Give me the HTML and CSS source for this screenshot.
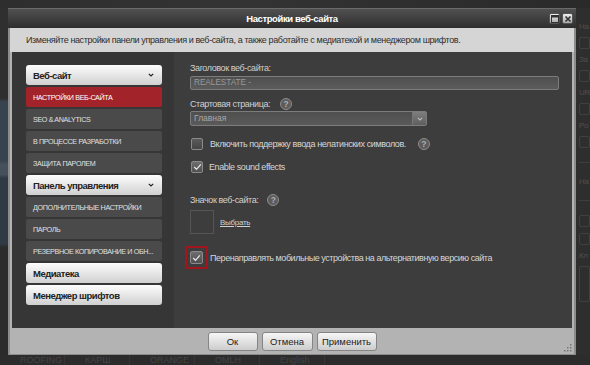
FILE: index.html
```html
<!DOCTYPE html>
<html lang="ru">
<head>
  <meta charset="UTF-8" />
  <title>Настройки веб-сайта</title>
  <link rel="stylesheet" href="styles.css">
</head>
<body>
  <div class="screen">
    <div class="backdrop-top"></div>

    <div class="middle">
      <div class="backdrop-left"></div>

      <div class="dialog">
        <div class="titlebar">
          <span></span>
          <span class="title">Настройки веб-сайта</span>
          <div class="win-buttons">
            <span class="win-btn">
              <svg width="8" height="8" viewBox="0 0 8 8"><rect x="0.5" y="0.5" width="7" height="7" fill="none" stroke="#333" /><line x1="0" y1="1.5" x2="8" y2="1.5" stroke="#333" stroke-width="2" /></svg>
            </span>
            <span class="win-btn">
              <svg width="8" height="8" viewBox="0 0 8 8"><path d="M1.5 1.5 L6.5 6.5 M6.5 1.5 L1.5 6.5" stroke="#333" stroke-width="1.6" /></svg>
            </span>
          </div>
        </div>

        <div class="desc">Изменяйте настройки панели управления и веб-сайта, а также работайте с медиатекой и менеджером шрифтов.</div>

        <div class="content">
          <div class="sidebar">
            <div class="nav-head">Веб-сайт <svg class="chev" width="6" height="4" viewBox="0 0 6 4"><path d="M0.8 0.8 L3 3 L5.2 0.8" fill="none" stroke="#222" stroke-width="1.2" /></svg></div>
            <div class="nav-item active">Настройки веб-сайта</div>
            <div class="nav-item">SEO &amp; Analytics</div>
            <div class="nav-item">В процессе разработки</div>
            <div class="nav-item">Защита паролем</div>
            <div class="nav-head">Панель управления <svg class="chev" width="6" height="4" viewBox="0 0 6 4"><path d="M0.8 0.8 L3 3 L5.2 0.8" fill="none" stroke="#222" stroke-width="1.2" /></svg></div>
            <div class="nav-item">Дополнительные настройки</div>
            <div class="nav-item">Пароль</div>
            <div class="nav-item">Резервное копирование и обн...</div>
            <div class="nav-head">Медиатека</div>
            <div class="nav-head">Менеджер шрифтов</div>
          </div>

          <div class="main">
            <div class="label">Заголовок веб-сайта:</div>
            <div class="text-input">REALESTATE -</div>

            <div class="label-row start-row">
              <span>Стартовая страница:</span>
              <span class="help">?</span>
            </div>
            <div class="select">
              <span class="select-value">Главная</span>
              <span class="select-btn"><svg width="6" height="4" viewBox="0 0 6 4"><path d="M0.8 0.8 L3 3 L5.2 0.8" fill="none" stroke="#bbb" stroke-width="1.1" /></svg></span>
            </div>

            <div class="check-row first">
              <span class="checkbox"></span>
              <span>Включить поддержку ввода нелатинских символов.</span>
              <span class="help">?</span>
            </div>
            <div class="check-row second">
              <span class="checkbox checked"><svg width="9" height="8" viewBox="0 0 9 8"><path d="M1.2 4 L3.5 6.3 L7.8 1.3" fill="none" stroke="#e6e6e6" stroke-width="1.3" /></svg></span>
              <span>Enable sound effects</span>
            </div>

            <div class="label-row icon-label">
              <span>Значок веб-сайта:</span>
              <span class="help">?</span>
            </div>
            <div class="icon-row">
              <span class="icon-box"></span>
              <a class="pick" href="#">Выбрать</a>
            </div>

            <div class="check-row redirect">
              <span class="highlight"><span class="checkbox checked"><svg width="9" height="8" viewBox="0 0 9 8"><path d="M1.2 4 L3.5 6.3 L7.8 1.3" fill="none" stroke="#e6e6e6" stroke-width="1.3" /></svg></span></span>
              <span>Перенаправлять мобильные устройства на альтернативную версию сайта</span>
            </div>
          </div>
        </div>

        <div class="footer">
          <span></span>
          <div class="buttons">
            <button class="btn ok">Ок</button>
            <button class="btn cancel">Отмена</button>
            <button class="btn apply">Применить</button>
          </div>
          <svg class="grip" width="8" height="8" viewBox="0 0 8 8">
            <rect x="6" y="0" width="1.5" height="1.5" fill="#777" />
            <rect x="3" y="3" width="1.5" height="1.5" fill="#777" />
            <rect x="6" y="3" width="1.5" height="1.5" fill="#777" />
            <rect x="0" y="6" width="1.5" height="1.5" fill="#777" />
            <rect x="3" y="6" width="1.5" height="1.5" fill="#777" />
            <rect x="6" y="6" width="1.5" height="1.5" fill="#777" />
          </svg>
        </div>
      </div>

      <div class="backdrop-right">
        <span class="bg-label">На</span>
        <span class="bg-box"></span>
        <span class="bg-label">За</span>
        <span class="bg-box"></span>
        <span class="bg-label">UR</span>
        <span class="bg-box"></span>
        <span class="bg-label">Po</span>
        <span class="bg-box"></span>
        <span class="bg-line"></span>
        <span class="bg-label">На</span>
        <span class="bg-line"></span>
        <span class="bg-box"></span>
        <span class="bg-box"></span>
        <span class="bg-label">Кл</span>
        <span class="bg-box tall"></span>
      </div>
    </div>

    <div class="backdrop-bottom">
      <span>ROOFING</span>
      <span>КАРШ</span>
      <span>ORANGE</span>
      <span>OMLH</span>
      <span>English</span>
    </div>
  </div>
</body>
</html>
```

FILE: styles.css
```css
* {
  box-sizing: border-box;
}

body {
  margin: 0;
  background: #2b2b2b;
  font-family: 'Liberation Sans', Arial, sans-serif;
  font-size: 9px;
  letter-spacing: -0.4px;
  color: #d8d8d8;
  overflow: hidden;
}

.screen {
  width: 590px;
  height: 365px;
  display: flex;
  flex-direction: column;
}

/* dimmed page behind the dialog */
.backdrop-top {
  height: 8px;
  background: linear-gradient(to right, #2e2e2e, #333 40%, #2a2a2a);
}

.middle {
  display: flex;
  height: 347px;
}

.backdrop-left {
  width: 8px;
  background: linear-gradient(#2f2f2f 0, #2f2f2f 26%, #37434e 27%, #37434e 44%, #45505a 45%, #45505a 48%, #2f3a44 49%, #2f3a44 68%, #2b2b2b 69%);
}

.backdrop-right {
  flex: 1;
  display: flex;
  flex-direction: column;
  gap: 6px;
  padding: 14px 0 0 3px;
  overflow: hidden;
  background: #2e2e2e;
}

.bg-label {
  color: #4e4e4e;
  font-size: 8px;
  white-space: nowrap;
}

.bg-box {
  height: 12px;
  border: 1px solid #404040;
  border-radius: 2px;
}

.bg-box.tall {
  height: 36px;
}

.bg-line {
  height: 1px;
  background: #3e3e3e;
  margin: 8px 0;
}

.backdrop-bottom {
  flex: 1;
  display: flex;
  background: #2c2c2c;
  color: #444;
  font-size: 9px;
  letter-spacing: 0;
  line-height: 10px;
  overflow: hidden;
}

.backdrop-bottom span {
  width: 65px;
  padding-left: 20px;
  border-right: 1px solid #363636;
}

/* dialog */
.dialog {
  width: 568px;
  display: flex;
  flex-direction: column;
  background: #8c8c8c;
  padding: 0 1px 1px;
}

.titlebar {
  height: 20px;
  margin: 0 -1px;
  display: grid;
  grid-template-columns: 1fr auto 1fr;
  align-items: center;
  background: linear-gradient(#505050, #2e2e2e);
  border-top: 1px solid #6a6a6a;
}

.title {
  color: #fff;
  font-weight: bold;
  font-size: 9.5px;
  letter-spacing: -0.4px;
}

.win-buttons {
  justify-self: end;
  display: flex;
  gap: 2px;
  padding-right: 3px;
}

.win-btn {
  width: 11px;
  height: 11px;
  display: flex;
  align-items: center;
  justify-content: center;
  background: linear-gradient(#f0f0f0, #a8a8a8);
  border: 1px solid #555;
  border-radius: 2px;
}

.desc {
  height: 24px;
  margin: 0 1px;
  padding-left: 16px;
  display: flex;
  align-items: center;
  background: #d5d5d5;
  color: #2e2e2e;
  letter-spacing: -0.38px;
}

.content {
  height: 276px;
  margin: 0 1px;
  padding: 0 2px;
  display: flex;
  background: #b3b3b3;
}

.sidebar {
  width: 163px;
  padding: 13px 12px 0 14px;
  display: flex;
  flex-direction: column;
  gap: 2px;
  background: #363636;
}

.nav-head {
  height: 20px;
  padding: 0 8px 0 7px;
  display: flex;
  align-items: center;
  justify-content: space-between;
  border-radius: 3px;
  background: linear-gradient(#fdfdfd, #d0d0d0);
  color: #222;
  font-weight: bold;
  font-size: 9.5px;
  letter-spacing: -0.5px;
}

.nav-item {
  height: 20px;
  padding-left: 7px;
  display: flex;
  align-items: center;
  border-radius: 2px;
  background: #4a4a4a;
  color: #e0e0e0;
  font-size: 7.2px;
  letter-spacing: -0.37px;
  text-transform: uppercase;
  white-space: nowrap;
}

.nav-item.active {
  background: #a2242a;
  color: #fff;
}

.main {
  flex: 1;
  padding: 10px 13px 0 16px;
  display: flex;
  flex-direction: column;
  align-items: flex-start;
  background: #3d3d3d;
}

.label {
  height: 12px;
  line-height: 12px;
  color: #d0d0d0;
}

.text-input {
  width: 369px;
  height: 14px;
  margin-top: 2px;
  padding-left: 3px;
  line-height: 12px;
  border: 1px solid #7c7c7c;
  border-radius: 2px;
  background: linear-gradient(#4f4f4f, #5c5c5c);
  color: #9a9a9a;
  font-size: 8.2px;
  letter-spacing: 0;
}

.label-row {
  height: 14px;
  display: flex;
  align-items: center;
  gap: 10px;
  color: #d0d0d0;
}

.start-row {
  margin-top: 7px;
}

.icon-label {
  margin-top: 19px;
  gap: 9px;
}

.help {
  width: 12px;
  height: 12px;
  display: flex;
  align-items: center;
  justify-content: center;
  border: 1.5px solid #8c8c8c;
  border-radius: 50%;
  background: #5c5c5c;
  color: #b0b0b0;
  font-weight: bold;
  font-size: 8.5px;
  letter-spacing: 0;
}

.select {
  width: 237px;
  height: 15px;
  display: flex;
  border: 1px solid #7c7c7c;
  border-radius: 2px;
  background: linear-gradient(#4f4f4f, #5a5a5a);
}

.select-value {
  flex: 1;
  padding-left: 3px;
  line-height: 13px;
  color: #a8a8a8;
  font-size: 8.5px;
  letter-spacing: 0;
}

.select-btn {
  width: 14px;
  display: flex;
  align-items: center;
  justify-content: center;
  border-left: 1px solid #777;
  background: linear-gradient(#7e7e7e, #5e5e5e);
}

.check-row {
  height: 14px;
  display: flex;
  align-items: center;
  gap: 7px;
  color: #d6d6d6;
}

.check-row.first {
  margin-top: 11px;
  padding-left: 1px;
}

.check-row.first .help {
  margin-left: 5px;
}

.check-row.second {
  margin-top: 9px;
  padding-left: 1px;
  gap: 6px;
}

.checkbox {
  width: 12px;
  height: 12px;
  display: flex;
  align-items: center;
  justify-content: center;
  border: 1px solid #8a8a8a;
  border-radius: 2px;
  background: linear-gradient(#5a5a5a, #454545);
}

.checkbox.checked {
  background: linear-gradient(#6e6e6e, #505050);
}

.icon-row {
  margin-top: 3px;
  display: flex;
  align-items: center;
  gap: 6px;
}

.icon-box {
  width: 24px;
  height: 24px;
  border: 1px solid #555;
}

.pick {
  color: #d0d0d0;
  font-size: 8px;
  letter-spacing: -0.3px;
}

.check-row.redirect {
  height: 23px;
  margin: 12px 0 0 -5px;
  gap: 2px;
  letter-spacing: -0.45px;
}

.highlight {
  padding: 3px;
  border: 2px solid #a3151d;
  border-radius: 2px;
}

.highlight .checkbox {
  width: 13px;
  height: 13px;
}

.footer {
  flex: 1;
  margin: 0 1px;
  display: grid;
  grid-template-columns: 1fr auto 1fr;
  background: #b3b3b3;
}

.buttons {
  padding-top: 4px;
  display: flex;
  gap: 4px;
}

.btn {
  height: 19px;
  padding: 0;
  border: 1px solid #858585;
  border-radius: 3px;
  background: linear-gradient(#f6f6f6, #cdcdcd);
  color: #222;
  font-family: 'Liberation Sans', Arial, sans-serif;
  font-size: 9.5px;
  letter-spacing: 0;
}

.ok {
  width: 50px;
}

.cancel {
  width: 51px;
}

.apply {
  width: 60px;
}

.grip {
  justify-self: end;
  align-self: end;
  margin: 0 2px 2px 0;
}
```
